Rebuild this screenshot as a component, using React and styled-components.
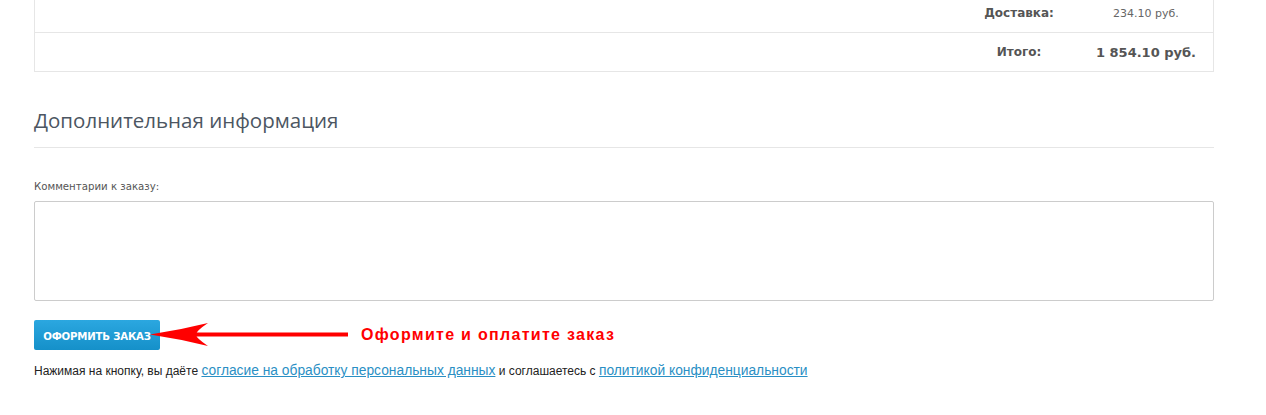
import React from "react";
import styled, { createGlobalStyle } from "styled-components";

const GlobalStyle = createGlobalStyle`
  html, body {
    margin: 0;
    padding: 0;
    background: #fff;
    overflow: hidden;
  }
  body {
    font-family: "DejaVu Sans", Verdana, sans-serif;
    color: #555;
  }
`;

export const Page = styled.div`
  padding: 0 52px 0 34px;
`;

export const Totals = styled.div`
  margin-top: -6px;
  border: 1px solid #e6e6e6;
  border-top: none;
`;

export const TotalRow = styled.div`
  display: grid;
  grid-template-columns: 1fr 120px 134px;
  align-items: center;
  height: 38px;
  border-bottom: ${({ last }) => (last ? "none" : "1px solid #e6e6e6")};
`;

export const TotalLabel = styled.div`
  grid-column: 2;
  text-align: center;
  font-family: "DejaVu Sans", Verdana, sans-serif;
  font-weight: 700;
  font-size: 12px;
  color: #555;
`;

export const TotalValue = styled.div`
  text-align: center;
  font-family: "DejaVu Sans", Verdana, sans-serif;
  font-size: ${({ strong }) => (strong ? "13px" : "11px")};
  font-weight: ${({ strong }) => (strong ? 700 : 400)};
  color: ${({ strong }) => (strong ? "#555" : "#666")};
`;

export const SectionTitle = styled.h2`
  margin: 33px 0 0;
  padding-bottom: 12px;
  border-bottom: 1px solid #e6e6e6;
  font-family: "Open Sans", sans-serif;
  font-weight: 400;
  font-size: 20.5px;
  line-height: 30px;
  color: #4c5662;
`;

export const Field = styled.div`
  display: flex;
  flex-direction: column;
  margin-top: 33px;
`;

export const Label = styled.label`
  font-family: "DejaVu Sans", Verdana, sans-serif;
  font-size: 10.2px;
  color: #555;
  margin-bottom: 9px;
`;

export const Comment = styled.textarea`
  box-sizing: border-box;
  width: 100%;
  height: 100px;
  border: 1px solid #ccc;
  border-radius: 2px;
  resize: none;
  outline: none;
  margin: 0;
  display: block;
`;

export const ActionRow = styled.div`
  display: flex;
  align-items: center;
  margin-top: 19px;
`;

export const SubmitButton = styled.button`
  box-sizing: border-box;
  width: 126px;
  height: 30px;
  border: none;
  border-radius: 2px;
  background: linear-gradient(#2ba7e0, #1590c9);
  color: #fff;
  font-family: "DejaVu Sans", Verdana, sans-serif;
  font-weight: 700;
  font-size: 10.2px;
  letter-spacing: -0.2px;
  text-transform: uppercase;
  padding: 2px 0 0;
`;

export const ArrowMark = styled.svg`
  display: block;
  margin-left: -10px;
  flex: none;
`;

export const Note = styled.span`
  margin-left: 13px;
  font-family: "Liberation Sans", Arial, sans-serif;
  font-weight: 700;
  font-size: 16px;
  letter-spacing: 1.3px;
  color: #f00;
`;

export const Consent = styled.p`
  margin: 12px 0 0;
  font-family: "Liberation Sans", Arial, sans-serif;
  font-size: 12px;
  line-height: 18px;
  color: #222;
`;

export const Link = styled.a`
  font-size: 13.8px;
  color: #2a8fc4;
  text-decoration: underline;
`;

const Arrow = () => (
  <ArrowMark width="198" height="26" viewBox="0 0 198 26">
    <rect x="44" y="10.5" width="154" height="4" fill="#f00" />
    <path
      d="M0 12.5 Q30 8 58 1 Q46 9 46 12.5 Q46 16 58 24 Q30 17 0 12.5 Z"
      fill="#f00"
    />
  </ArrowMark>
);

export default function App() {
  return (
    <Page>
      <GlobalStyle />
      <Totals>
        <TotalRow>
          <TotalLabel>Доставка:</TotalLabel>
          <TotalValue>234.10 руб.</TotalValue>
        </TotalRow>
        <TotalRow last>
          <TotalLabel>Итого:</TotalLabel>
          <TotalValue strong>1 854.10 руб.</TotalValue>
        </TotalRow>
      </Totals>

      <SectionTitle>Дополнительная информация</SectionTitle>

      <Field>
        <Label>Комментарии к заказу:</Label>
        <Comment />
      </Field>

      <ActionRow>
        <SubmitButton>Оформить заказ</SubmitButton>
        <Arrow />
        <Note>Оформите и оплатите заказ</Note>
      </ActionRow>

      <Consent>
        Нажимая на кнопку, вы даёте{" "}
        <Link href="#">согласие на обработку персональных данных</Link> и
        соглашаетесь с <Link href="#">политикой конфиденциальности</Link>
      </Consent>
    </Page>
  );
}
